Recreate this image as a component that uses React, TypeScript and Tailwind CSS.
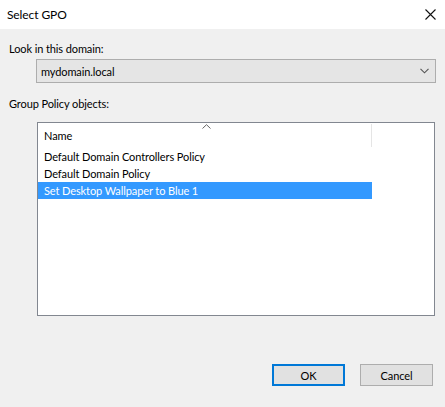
import React from "react";

const rows = [
  "Default Domain Controllers Policy",
  "Default Domain Policy",
  "Set Desktop Wallpaper to Blue 1",
];

export default function App() {
  const selected = 2;
  return (
    <div
      className="w-[445px] h-[407px] bg-[#f0f0f0] flex flex-col text-[11px] tracking-[-0.1px] text-black overflow-hidden"
      style={{ fontFamily: 'Lato, "Liberation Sans", sans-serif' }}
    >
      {/* title bar */}
      <div className="h-[29px] bg-white flex items-center justify-between pl-[7px] pr-[9px] shrink-0">
        <span className="leading-none text-[12px]">Select GPO</span>
        <svg width="11" height="11" viewBox="0 0 11 11">
          <path d="M0.5 0.5L10.5 10.5M10.5 0.5L0.5 10.5" stroke="#111" strokeWidth="1.1" />
        </svg>
      </div>

      <div className="flex flex-col pl-[9px] pr-[9px]">
        <div className="h-[16px] mt-[11px] flex items-center leading-none">Look in this domain:</div>

        {/* combo */}
        <div className="ml-[27px] mt-[3px] h-[24px] w-[400px] bg-[#e5e5e5] border border-[#adadad] flex items-center justify-between pl-[4px] pr-[6px]">
          <span className="leading-none">mydomain.local</span>
          <svg width="9" height="6" viewBox="0 0 9 6">
            <path d="M0.5 0.8L4.5 4.8L8.5 0.8" stroke="#555" strokeWidth="1.1" fill="none" />
          </svg>
        </div>

        <div className="h-[16px] mt-[12px] flex items-center leading-none">Group Policy objects:</div>

        {/* list view */}
        <div className="ml-[28px] mt-[11px] w-[398px] h-[194px] bg-white border border-[#828790] flex flex-col">
          <div className="relative h-[25px] flex items-stretch shrink-0">
            <div className="w-[334px] flex items-center pl-[6px] leading-none border-r border-[#e5e5e5] my-[1px]">
              Name
            </div>
            <svg
              width="9"
              height="5"
              viewBox="0 0 9 5"
              className="absolute left-[164px] top-[1px]"
            >
              <path d="M0.5 4.5L4.5 0.7L8.5 4.5" stroke="#666" strokeWidth="1" fill="none" />
            </svg>
          </div>
          {rows.map((r, i) => (
            <div
              key={r}
              className={`w-[334px] h-[17px] flex items-center pl-[6px] leading-none ${
                i === selected ? "bg-[#3399ff] text-white" : ""
              }`}
            >
              {r}
            </div>
          ))}
        </div>

        {/* buttons */}
        <div className="mt-[48px] flex justify-end gap-[15px] pr-[3px]">
          <button className="w-[73px] h-[22px] bg-[#e1e1e1] border-2 border-[#0078d7] flex items-center justify-center leading-none">
            OK
          </button>
          <button className="w-[73px] h-[22px] bg-[#e1e1e1] border border-[#adadad] flex items-center justify-center leading-none">
            Cancel
          </button>
        </div>
      </div>
    </div>
  );
}
